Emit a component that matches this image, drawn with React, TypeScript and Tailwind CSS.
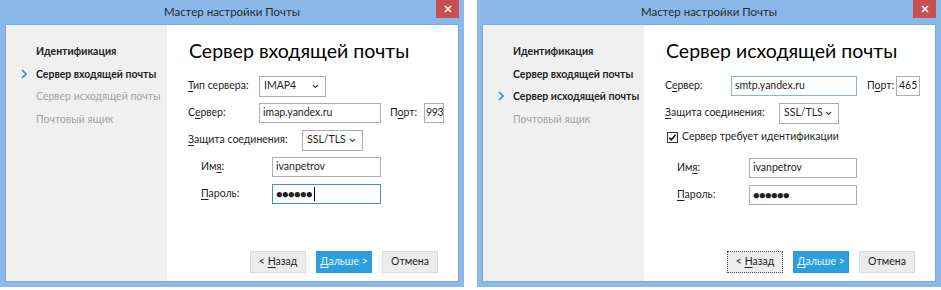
import React from "react";

const font = { fontFamily: '"Segoe UI", Lato, "Noto Sans", sans-serif' };

function U({ children }: { children: React.ReactNode }) {
  return <span className="underline underline-offset-2">{children}</span>;
}

function Chevron() {
  return (
    <svg width="6" height="10" viewBox="0 0 6 10" className="absolute left-[-15px] top-[6px]">
      <polyline points="1,1 5,5 1,9" fill="none" stroke="#3c8ed8" strokeWidth="1.6" />
    </svg>
  );
}

function Select({ value, w }: { value: string; w: string }) {
  return (
    <div className={`flex h-[21px] items-center justify-between border border-[#acacac] bg-white pl-[4px] pr-[6px] ${w}`}>
      <span>{value}</span>
      <svg width="7" height="5" viewBox="0 0 7 5">
        <polyline points="1,1 3.5,3.5 6,1" fill="none" stroke="#444" strokeWidth="1.2" />
      </svg>
    </div>
  );
}

function Input({
  value,
  w,
  px = "px-[3px]",
  border = "border-[#abadb3]",
  children,
}: {
  value?: string;
  w: string;
  px?: string;
  border?: string;
  children?: React.ReactNode;
}) {
  return (
    <div className={`flex h-[20px] items-center overflow-hidden border bg-white ${px} ${border} ${w}`}>
      {children ?? <span>{value}</span>}
    </div>
  );
}

function Dots({ caret }: { caret?: boolean }) {
  return (
    <span className="flex items-center">
      <span className="text-[11px] tracking-[-0.6px] text-[#222]">●●●●●●</span>
      {caret && <span className="ml-[2px] h-[14px] w-[1px] bg-black" />}
    </span>
  );
}

const steps = ["Идентификация", "Сервер входящей почты", "Сервер исходящей почты", "Почтовый ящик"];

function Sidebar({ current }: { current: number }) {
  return (
    <div className="flex w-[161px] flex-none flex-col bg-[#f0f0f0] pl-[30px] pt-[15px] text-[10.5px]">
      {steps.map((s, i) => (
        <div
          key={s}
          className={`relative h-[22.6px] leading-[22px] ${
            i <= current ? "font-bold text-[#1e1e1e]" : "text-[#a3a3a3]"
          }`}
        >
          {i === current && <Chevron />}
          {s}
        </div>
      ))}
    </div>
  );
}

function Buttons({ focusBack }: { focusBack?: boolean }) {
  const base = "flex h-[22px] w-[56px] items-center justify-center border text-[10.5px]";
  return (
    <div className="mt-auto flex justify-end gap-[10px] pb-[8px] pr-[20px]">
      <div className={`${base} bg-[#ececec] ${focusBack ? "border-dotted border-[#444]" : "border-[#dadada]"}`}>
        <span>
          &lt;&nbsp;<U>Н</U>азад
        </span>
      </div>
      <div className={`${base} border-[#2c9ad8] bg-[#2c9fdc] text-[#eaf5fc]`}>
        <span>
          <U>Д</U>альше &gt;
        </span>
      </div>
      <div className={`${base} border-[#dadada] bg-[#ececec]`}>Отмена</div>
    </div>
  );
}

function Window({ children }: { children: React.ReactNode }) {
  return (
    <div className="flex h-[287px] w-[464px] flex-none flex-col bg-[#8ab8e9]">
      <div className="relative flex h-[24px] flex-none items-center justify-center text-[11.5px] text-[#2a2a2a]">
        Мастер настройки Почты
        <div className="absolute right-[5px] top-0 flex h-[18px] w-[23px] items-center justify-center bg-[#c75050]">
          <svg width="8" height="8" viewBox="0 0 8 8">
            <path d="M1 1 L7 7 M7 1 L1 7" stroke="#fff" strokeWidth="1.6" />
          </svg>
        </div>
      </div>
      <div className="mx-[5px] mb-[5px] flex flex-1 border border-[#7aa9dc]">{children}</div>
    </div>
  );
}

function Heading({ children }: { children: React.ReactNode }) {
  return <div className="ml-[1px] h-[28px] text-[19.5px] leading-[28px] text-black">{children}</div>;
}

export default function App() {
  return (
    <div
      className="flex h-[290px] w-[941px] gap-[13px] whitespace-nowrap bg-white text-[10.5px] text-[#1e1e1e]"
      style={font}
    >
      <Window>
        <Sidebar current={1} />
        <div className="flex flex-1 flex-col bg-white pl-[21px] pt-[12px]">
          <Heading>Сервер входящей почты</Heading>
          <div className="mt-[11px] flex flex-col gap-[7px]">
            <div className="flex h-[20px] items-center">
              <span className="w-[71px]">
                <U>Т</U>ип сервера:
              </span>
              <Select value="IMAP4" w="w-[67px]" />
            </div>
            <div className="flex h-[20px] items-center">
              <span className="w-[71px]">
                С<U>е</U>рвер:
              </span>
              <Input value="imap.yandex.ru" w="w-[122px]" />
              <span className="ml-[9px] w-[34px]">
                П<U>о</U>рт:
              </span>
              <Input w="w-[20px]" px="px-[1px]">
                <span className="tracking-[-0.4px]">993</span>
              </Input>
            </div>
            <div className="flex h-[20px] items-center">
              <span className="w-[114px]">
                <U>З</U>ащита соединения:
              </span>
              <Select value="SSL/TLS" w="w-[61px]" />
            </div>
            <div className="flex h-[20px] items-center pl-[13px]">
              <span className="w-[71px]">
                Им<U>я</U>:
              </span>
              <Input value="ivanpetrov" w="w-[109px]" />
            </div>
            <div className="flex h-[20px] items-center pl-[13px]">
              <span className="w-[71px]">
                <U>П</U>ароль:
              </span>
              <Input w="w-[109px]" border="border-[#3c8fdc]">
                <Dots caret />
              </Input>
            </div>
          </div>
          <Buttons />
        </div>
      </Window>
      <Window>
        <Sidebar current={2} />
        <div className="flex flex-1 flex-col bg-white pl-[21px] pt-[12px]">
          <Heading>Сервер исходящей почты</Heading>
          <div className="mt-[11px] flex flex-col">
            <div className="flex h-[20px] items-center">
              <span className="w-[66px]">
                С<U>е</U>рвер:
              </span>
              <Input value="smtp.yandex.ru" w="w-[126px]" border="border-[#7eb4ea]" />
              <span className="ml-[10px] w-[29px]">
                П<U>о</U>рт:
              </span>
              <Input value="465" w="w-[24px]" px="px-[2px]" />
            </div>
            <div className="mt-[7px] flex h-[20px] items-center">
              <span className="w-[114px]">
                <U>З</U>ащита соединения:
              </span>
              <Select value="SSL/TLS" w="w-[60px]" />
            </div>
            <div className="mt-[7px] flex h-[14px] items-center gap-[4px] pl-[2px]">
              <svg width="11" height="11" viewBox="0 0 11 11">
                <rect x="0.5" y="0.5" width="10" height="10" fill="#fff" stroke="#333" />
                <polyline points="2.3,5.6 4.4,7.8 8.6,2.8" fill="none" stroke="#111" strokeWidth="1.6" />
              </svg>
              <span>Сервер требует идентификации</span>
            </div>
            <div className="mt-[14px] flex h-[20px] items-center pl-[12px]">
              <span className="w-[72px]">
                Им<U>я</U>:
              </span>
              <Input value="ivanpetrov" w="w-[108px]" />
            </div>
            <div className="mt-[7px] flex h-[20px] items-center pl-[12px]">
              <span className="w-[72px]">
                <U>П</U>ароль:
              </span>
              <Input w="w-[108px]">
                <Dots />
              </Input>
            </div>
          </div>
          <Buttons focusBack />
        </div>
      </Window>
    </div>
  );
}
